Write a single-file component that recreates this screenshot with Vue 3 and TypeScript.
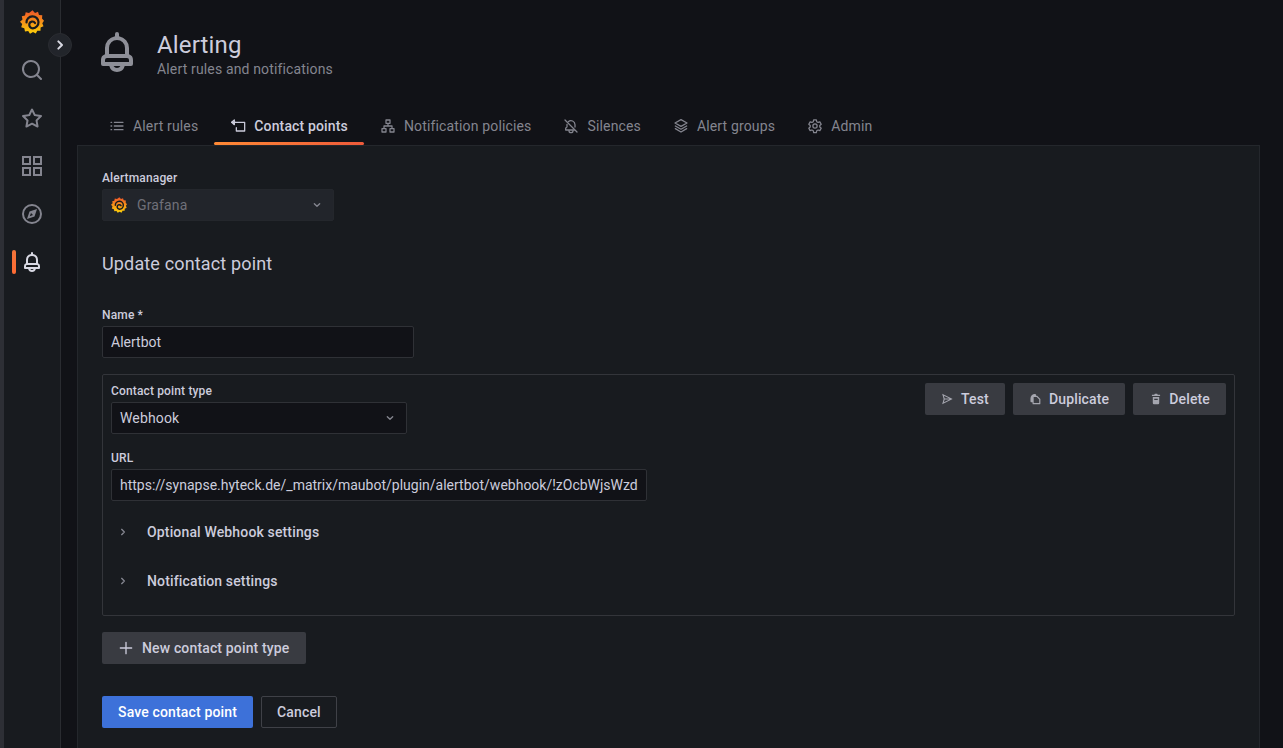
<template>
  <div class="page">
    <div class="strip"></div>
    <nav class="sidebar">
      <a class="nav-item logo">
        <svg viewBox="0 0 24 24" width="24" height="24"><use href="#grafana-logo" /></svg>
      </a>
      <a v-for="item in navItems" :key="item.name" class="nav-item" :class="{ active: item.active }">
        <span v-if="item.active" class="nav-marker"></span>
        <svg viewBox="0 0 24 24" width="24" height="24" fill="currentColor">
          <path v-for="d in item.paths" :key="d" :d="d" />
        </svg>
      </a>
      <button class="expand">
        <svg viewBox="0 0 24 24" width="16" height="16" fill="none" stroke="currentColor" stroke-width="3" stroke-linecap="round" stroke-linejoin="round"><path d="M9.5 6.5 15 12l-5.500 5.500" /></svg>
      </button>
    </nav>

    <main class="main">
      <!-- logo kept as a shared symbol, used in the nav and the select -->
      <svg class="defs" width="0" height="0">
        <defs>
          <linearGradient id="gf" x1="0" y1="1" x2="0" y2="0">
            <stop offset="0.05" stop-color="#fbca0a" />
            <stop offset="0.95" stop-color="#f05a28" />
          </linearGradient>
          <symbol id="grafana-logo" viewBox="0 0 24 24">
            <path fill="url(#gf)" d="M12.500 .3 15 3 18 1.800 19 5 22.300 5.300 22 8.500 24 10.700 22.300 13.200 23.500 16.200 20.600 17.500 20.500 20.800 17.300 20.700 15.800 23.500 13 22 10 23.700 8.200 21 5 21.500 4.300 18.300 1.200 17.200 2.200 14 0 11.800 2.500 9.500 1.800 6.300 5 5.500 5.700 2.300 9 3Z" />
            <path fill="none" stroke="#181b1f" stroke-width="2.200" stroke-linecap="round" d="M6.500 12.500A6 6 0 1 1 12.800 18.300 3.700 3.700 0 0 1 9.300 14 3.100 3.100 0 0 1 15 13" />
          </symbol>
        </defs>
      </svg>

      <header class="page-header">
        <svg class="header-icon" viewBox="0 0 24 24" width="48" height="48" fill="currentColor"><path :d="bell" /></svg>
        <div>
          <h1>Alerting</h1>
          <p>Alert rules and notifications</p>
        </div>
      </header>

      <div class="tabs">
        <a v-for="tab in tabs" :key="tab.label" class="tab" :class="{ active: tab.active }">
          <svg viewBox="0 0 24 24" width="16" height="16" fill="none" stroke="currentColor" stroke-width="1.900" stroke-linejoin="round" stroke-linecap="round">
            <path v-for="d in tab.paths" :key="d" :d="d" />
          </svg>
          {{ tab.label }}
        </a>
      </div>

      <section class="panel">
        <label class="field-label">Alertmanager</label>
        <div class="select disabled am-select">
          <svg viewBox="0 0 24 24" width="16" height="16"><use href="#grafana-logo" /></svg>
          <span class="am-name">Grafana</span>
          <svg class="chevron" viewBox="0 0 24 24" width="16" height="16" fill="none" stroke="currentColor" stroke-width="2" stroke-linecap="round" stroke-linejoin="round"><path d="m8 10 4 4 4-4" /></svg>
        </div>

        <h2>Update contact point</h2>

        <label class="field-label">Name *</label>
        <input class="input name-input" value="Alertbot" />

        <div class="receiver">
          <div class="receiver-actions">
            <button v-for="a in actions" :key="a.label" class="btn">
              <svg viewBox="0 0 24 24" width="14" height="14" fill="currentColor"><path :d="a.path" /></svg>
              {{ a.label }}
            </button>
          </div>
          <label class="field-label">Contact point type</label>
          <div class="select type-select">
            <span>Webhook</span>
            <svg class="chevron" viewBox="0 0 24 24" width="16" height="16" fill="none" stroke="currentColor" stroke-width="2" stroke-linecap="round" stroke-linejoin="round"><path d="m8 10 4 4 4-4" /></svg>
          </div>
          <label class="field-label url-label">URL</label>
          <input class="input url-input" value="https://synapse.hyteck.de/_matrix/maubot/plugin/alertbot/webhook/!zOcbWjsWzd" />
          <div v-for="(s, i) in sections" :key="s" class="collapse" :class="{ first: i === 0 }">
            <svg viewBox="0 0 24 24" width="16" height="16" fill="none" stroke="currentColor" stroke-width="2" stroke-linecap="round" stroke-linejoin="round"><path d="m10 8 4 4-4 4" /></svg>
            <span>{{ s }}</span>
          </div>
        </div>

        <button class="btn new-type">
          <svg viewBox="0 0 24 24" width="16" height="16" fill="none" stroke="currentColor" stroke-width="2" stroke-linecap="round"><path d="M12 3.500v17M3.500 12h17" /></svg>
          New contact point type
        </button>

        <div class="form-actions">
          <button class="btn primary">Save contact point</button>
          <button class="btn outline">Cancel</button>
        </div>
      </section>
    </main>
  </div>
</template>

<script setup lang="ts">
const bell = 'M18,13.18V10a6,6,0,0,0-5-5.91V3a1,1,0,0,0-2,0V4.09A6,6,0,0,0,6,10v3.18A3,3,0,0,0,4,16v2a1,1,0,0,0,1,1H8.14a4,4,0,0,0,7.72,0H19a1,1,0,0,0,1-1V16A3,3,0,0,0,18,13.18ZM8,10a4,4,0,0,1,8,0v3H8ZM12,20a2,2,0,0,1-1.72-1h3.44A2,2,0,0,1,12,20Zm6-3H6V16a1,1,0,0,1,1-1H17a1,1,0,0,1,1,1Z'

const navItems = [
  { name: 'search', paths: ['M21.71,20.29,18,16.61A9,9,0,1,0,16.61,18l3.68,3.68a1,1,0,0,0,1.42,0A1,1,0,0,0,21.71,20.29ZM11,18a7,7,0,1,1,7-7A7,7,0,0,1,11,18Z'] },
  { name: 'starred', paths: ['M22,9.67A1,1,0,0,0,21.14,9l-5.69-.83L12.9,3a1,1,0,0,0-1.8,0L8.55,8.16,2.86,9a1,1,0,0,0-.81.68,1,1,0,0,0,.25,1l4.13,4-1,5.68A1,1,0,0,0,6.9,21.44L12,18.77l5.1,2.67a.93.93,0,0,0,.46.12,1,1,0,0,0,.59-.19,1,1,0,0,0,.4-1l-1-5.68,4.13-4A1,1,0,0,0,22,9.67Zm-6.15,4a1,1,0,0,0-.29.88l.72,4.2-3.76-2a1.06,1.06,0,0,0-.94,0l-3.76,2,.72-4.2a1,1,0,0,0-.29-.88l-3-3,4.21-.61a1,1,0,0,0,.76-.55L12,5.7l1.88,3.820a1,1,0,0,0,.76.55l4.21.61Z'] },
  { name: 'dashboards', paths: ['M2,2H11V11H2ZM4,4V9H9V4ZM13,2H22V11H13ZM15,4V9H20V4ZM2,13H11V22H2ZM4,15V20H9V15ZM13,13H22V22H13ZM15,15V20H20V15Z'] },
  { name: 'explore', paths: ['M12,2A10,10,0,1,0,22,12,10,10,0,0,0,12,2Zm0,18a8,8,0,1,1,8-8A8,8,0,0,1,12,20Z', 'M17,7 14.500,14.500 7,17 9.500,9.500ZM11,11 9.800,14.200 13,13Z'] },
  { name: 'alerting', active: true, paths: [bell] },
]

const tabs = [
  { label: 'Alert rules', paths: ['M8 6.500h13M8 12h13M8 17.500h13M3 6.500h1M3 12h1M3 17.500h1'] },
  { label: 'Contact points', active: true, paths: ['M8 6.500h14v13H9.500v-5', 'M6.500 3 2.500 6.500 6.500 10Z', 'M2.500 6.500H8'] },
  { label: 'Notification policies', paths: ['M9 3h6v5H9ZM3 16h6v5H3ZM15 16h6v5h-6ZM12 8v4M6 16v-4h12v4'] },
  { label: 'Silences', paths: ['M3 3 21 21', 'M8 5.500A6 6 0 0 1 18 10v3.500', 'M6 9.500v4A3 3 0 0 0 4 16v2h13', 'M9 19a3 3 0 0 0 6 0'] },
  { label: 'Alert groups', paths: ['M12 2.500 21 7.500 12 12.500 3 7.500Z', 'M3.500 12 12 16.800 20.500 12', 'M3.500 16 12 21 20.500 16'] },
  { label: 'Admin', paths: ['M12 8.800A3.200 3.200 0 1 0 12 15.200 3.200 3.200 0 0 0 12 8.800Z', 'M10 2.800h4l.6 2.800 2 1.100 2.700-.9 2 3.500-2.100 1.900v2.300l2.100 1.900-2 3.500-2.700-.9-2 1.100-.6 2.800h-4l-.6-2.800-2-1.100-2.700.9-2-3.500 2.100-1.900v-2.300L2.700 9.300l2-3.500 2.700.9 2-1.100Z'] },
]

const actions = [
  { label: 'Test', path: 'M2 3 20 12 2 21 4.500 12ZM5 6.500 6.300 11H14.500ZM6.300 13 5 17.500 14.500 13Z' },
  { label: 'Duplicate', path: 'M10 3.500A7.500 7.500 0 0 0 2.500 11V16A1.500 1.500 0 0 0 4 17.500H6V19.500A1.500 1.500 0 0 0 7.500 21H18A1.500 1.500 0 0 0 19.500 19.500V12L14 6.500H12A2 2 0 0 0 10 3.500ZM8 8.500H13.200L17.500 12.800V19H8Z' },
  { label: 'Delete', path: 'M10 3H14L15 4.500H19V7H5V4.500H9ZM6.500 8.500H17.500V19A2 2 0 0 1 15.500 21H8.500A2 2 0 0 1 6.500 19ZM9 11.500V13.500H15V11.500Z' },
]

const sections = ['Optional Webhook settings', 'Notification settings']
</script>

<style>
html, body {
  margin: 0;
  height: 100%;
  overflow: hidden;
  background: #111217;
}
</style>

<style scoped>
.page {
  display: flex;
  height: 748px;
  overflow: hidden;
  background: #111217;
  color: #ccccdc;
  font-family: Roboto, "Liberation Sans", sans-serif;
  font-size: 14px;
  letter-spacing: 0.01071em;
}
.defs {
  position: absolute;
}
.strip {
  width: 4px;
  flex: none;
  background: #2d2f35;
}
.sidebar {
  position: relative;
  width: 56px;
  flex: none;
  display: flex;
  flex-direction: column;
  background: #181b1f;
  border-right: 1px solid #2a2c31;
}
.nav-item {
  position: relative;
  height: 48px;
  flex: none;
  display: flex;
  align-items: center;
  justify-content: center;
  color: #84858f;
}
.nav-item.logo {
  height: 44px;
  padding-bottom: 2px;
}
.nav-item.active {
  color: #d8d9e3;
}
.nav-marker {
  position: absolute;
  left: 8px;
  top: 12px;
  width: 4px;
  height: 24px;
  border-radius: 2px;
  background: linear-gradient(180deg, #f2743a, #ff6b33);
}
.expand {
  position: absolute;
  top: 33px;
  left: 44px;
  width: 24px;
  height: 24px;
  padding: 0;
  display: flex;
  align-items: center;
  justify-content: center;
  border: 1px solid #2a2c31;
  border-radius: 50%;
  background: #22252b;
  color: #d8d9e3;
}
.main {
  flex: 1;
  min-width: 0;
  padding: 0 23px 0 16px;
}
.page-header {
  display: flex;
  align-items: flex-start;
  padding-top: 28px;
  padding-left: 16px;
  height: 110px;
  box-sizing: border-box;
}
.header-icon {
  color: #8e8f98;
  margin-right: 16px;
  flex: none;
}
h1 {
  margin: 0;
  height: 31px;
  font-size: 24px;
  font-weight: 400;
  line-height: 34px;
}
.page-header p {
  margin: 0;
  font-size: 14px;
  line-height: 20px;
  color: #84858f;
}
.tabs {
  display: flex;
  height: 35px;
  padding-left: 16px;
}
.tab {
  position: relative;
  display: flex;
  align-items: center;
  gap: 8px;
  padding: 0 16px 3px;
  color: #84858f;
  line-height: 20px;
  white-space: nowrap;
}
.tab.active {
  color: #ccccdc;
  font-weight: 500;
}
.tab.active::after {
  content: "";
  position: absolute;
  left: 0;
  right: 0;
  bottom: 0;
  height: 3px;
  border-radius: 2px;
  background: linear-gradient(90deg, #ff8a35, #ee5a3a);
}
.panel {
  height: 620px;
  box-sizing: border-box;
  padding: 24px;
  background: #181b1f;
  border: 1px solid #24272c;
}
.field-label {
  display: block;
  margin-bottom: 3px;
  font-size: 12px;
  font-weight: 500;
  line-height: 16px;
  color: #ccccdc;
}
.select,
.input {
  height: 32px;
  box-sizing: border-box;
  border: 1px solid #2f3136;
  border-radius: 2px;
  background: #111217;
  color: #ccccdc;
  font: inherit;
}
.select {
  display: flex;
  align-items: center;
  padding: 0 8px;
}
.select .chevron {
  margin-left: auto;
  color: #84858f;
}
.input {
  display: block;
  padding: 0 8px;
  outline: none;
  letter-spacing: normal;
}
.am-select {
  width: 232px;
  background: #22252b;
  border-color: #24272c;
  color: #6f7079;
}
.am-select .am-name {
  margin-left: 10px;
}
h2 {
  margin: 32px 0 0;
  font-size: 18px;
  font-weight: 400;
  line-height: 22px;
  height: 54px;
}
.name-input {
  width: 312px;
}
.receiver {
  position: relative;
  margin-top: 16px;
  height: 242px;
  box-sizing: border-box;
  padding: 8px;
  border: 1px solid #33353a;
  border-radius: 2px;
}
.receiver-actions {
  position: absolute;
  top: 8px;
  right: 8px;
  display: flex;
  gap: 8px;
}
.btn {
  display: inline-flex;
  align-items: center;
  gap: 8px;
  height: 32px;
  box-sizing: border-box;
  padding: 0 16px;
  border: none;
  border-radius: 2px;
  background: #393b41;
  color: #ccccdc;
  font: inherit;
  font-weight: 500;
  line-height: 20px;
  letter-spacing: inherit;
  white-space: nowrap;
}
.btn svg {
  color: #a4a5ae;
}
.receiver-actions .btn {
  gap: 6px;
}
.type-select {
  width: 296px;
}
.url-label {
  margin-top: 16px;
}
.url-input {
  width: 536px;
}
.collapse {
  display: flex;
  align-items: center;
  height: 49px;
  font-weight: 500;
}
.collapse.first {
  margin-top: 6px;
}
.collapse svg {
  margin-right: 16px;
  margin-left: 4px;
  color: #84858f;
}
.new-type {
  margin-top: 16px;
  display: flex;
}
.new-type svg {
  color: #ccccdc;
}
.form-actions {
  display: flex;
  gap: 8px;
  margin-top: 32px;
}
.btn.primary {
  background: #3d71d9;
  color: #fff;
}
.btn.outline {
  background: transparent;
  border: 1px solid #3f4147;
  padding: 0 15px;
}
</style>
